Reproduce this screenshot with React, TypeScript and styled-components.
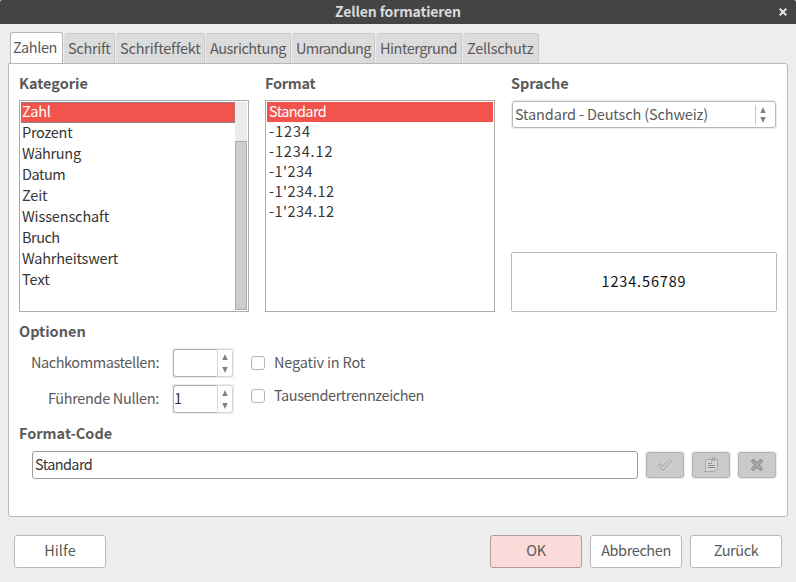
import React from "react";
import styled, { createGlobalStyle } from "styled-components";

const Global = createGlobalStyle`
  * { box-sizing: border-box; }
  body { margin: 0; background: #ededed; }
  button, input { font: inherit; color: inherit; }
`;

const Dialog = styled.main`
  width: 796px;
  height: 582px;
  overflow: hidden;
  background: #ededed;
  color: #5a5a5a;
  font: 14.5px/20px "Noto Sans CJK SC", "Noto Sans", sans-serif;
  white-space: nowrap;
`;
const TitleBar = styled.header`
  height: 24px;
  display: grid;
  grid-template-columns: 26px 1fr 26px;
  align-items: center;
  justify-items: center;
  background: #444;
  border-radius: 2px 2px 0 0;
  color: #dadada;
`;
const Label = styled.span<{ $s?: number }>`
  letter-spacing: ${(p) => p.$s ?? 0}px;
`;
const Title = styled.h1`
  grid-column: 2;
  margin: 0;
  padding-bottom: 2px;
  font-size: 14px;
  line-height: 20px;
  font-weight: 700;
  letter-spacing: -0.14px;
`;
const Tabs = styled.nav`
  display: flex;
  align-items: flex-end;
  gap: 1px;
  height: 39px;
  padding-left: 10px;
`;
const Tab = styled.div<{ $w: number; $active?: boolean }>`
  width: ${(p) => p.$w}px;
  height: ${(p) => (p.$active ? 31 : 30)}px;
  display: flex;
  align-items: center;
  padding: 0 0 ${(p) => (p.$active ? 2 : 1)}px ${(p) => (p.$active ? 2 : 3)}px;
  border: 1px solid ${(p) => (p.$active ? "#b7b7b7" : "#cacaca")};
  border-left-color: ${(p) => (p.$active ? "#b7b7b7" : "#dcdcdc")};
  border-bottom: 0;
  border-radius: 3px 3px 0 0;
  background: ${(p) => (p.$active ? "#fff" : "#dcdcdc")};
`;
const Panel = styled.section`
  width: 780px;
  height: 454px;
  margin-left: 8px;
  padding: 10px 10px 0;
  background: #fff;
  border: 1px solid #b8b8b8;
  border-radius: 0 3px 3px 3px;
`;
const Columns = styled.div`
  display: grid;
  grid-template-columns: 230px 230px 266px;
  gap: 16px;
  height: 248px;
`;
const Column = styled.div`
  display: flex;
  flex-direction: column;
  height: 238px;
`;
const Heading = styled.h2<{ $s?: number }>`
  margin: 0;
  height: 26px;
  font-size: 14.5px;
  line-height: 17px;
  font-weight: 700;
  letter-spacing: ${(p) => p.$s ?? 0}px;
`;
const ListBox = styled.div`
  display: flex;
  height: 212px;
  padding: 1px;
  border: 1px solid #acacac;
  color: #353535;
`;
const Items = styled.div`
  flex: 1;
`;
const Item = styled.div<{ $h: number; $selected?: boolean; $focus?: boolean; $pad: number; $s: number }>`
  height: ${(p) => p.$h}px;
  line-height: 18px;
  padding-left: ${(p) => p.$pad}px;
  letter-spacing: ${(p) => p.$s}px;
  background: ${(p) => (p.$selected ? "#f2544d" : "transparent")};
  color: ${(p) => (p.$selected ? "#fff" : "inherit")};
  outline: ${(p) => (p.$focus ? "1px dotted #8a8284" : "none")};
  outline-offset: -1px;
`;
const Track = styled.div`
  width: 12px;
  padding-top: 39px;
  background: #ebebeb;
`;
const Thumb = styled.div`
  width: 12px;
  height: 169px;
  border: 1px solid #adadad;
  background: #cdcdcd;
`;
const Select = styled.div`
  height: 27px;
  margin: 1px;
  display: flex;
  align-items: center;
  justify-content: space-between;
  padding: 0 9px 0 2px;
  border: 1px solid #b7b7b7;
  border-radius: 3px;
  box-shadow: 0 0 0 1px #ececec;
`;
const SelectText = styled.span`
  padding-bottom: 2px;
  letter-spacing: -0.14px;
`;
const Arrows = styled.span`
  display: flex;
  height: 19px;
  padding-left: 4px;
  align-items: center;
  border-left: 1px solid #c8c8c8;
`;
const Preview = styled.div`
  height: 60px;
  margin-top: auto;
  padding-bottom: 3px;
  display: flex;
  align-items: center;
  justify-content: center;
  border: 1px solid #bbb;
  border-radius: 2px;
  color: #111;
`;
const Options = styled.div`
  display: grid;
  grid-template-columns: 141px 62px 1fr;
  grid-template-rows: 30px 30px;
  gap: 6px 12px;
  height: 76px;
  align-items: center;
`;
const OptionLabel = styled.div<{ $s: number }>`
  text-align: right;
  padding: 0 1px 3px 0;
  letter-spacing: ${(p) => p.$s}px;
`;
const Spinner = styled.div`
  width: 62px;
  height: 30px;
  display: flex;
  border: 1px solid #ececec;
`;
const SpinValue = styled.div`
  width: 44px;
  height: 28px;
  padding-top: 2px;
  border: 1px solid #b0b0b0;
  border-right: 0;
  border-radius: 3px 0 0 3px;
  color: #353535;
`;
const SpinButtons = styled.div`
  width: 16px;
  display: flex;
  align-items: center;
  justify-content: center;
  border: 1px solid #d6d6d6;
  border-radius: 0 3px 3px 0;
`;
const Check = styled.label<{ $up?: number }>`
  display: flex;
  align-items: center;
  gap: 9px;
  padding-left: 5px;
  margin-top: ${(p) => -(p.$up ?? 0)}px;
`;
const CheckText = styled.span<{ $s: number }>`
  margin: -1px 0 1px;
  letter-spacing: ${(p) => p.$s}px;
`;
const Box = styled.span`
  width: 14px;
  height: 14px;
  border: 1px solid #b4b4b4;
  border-radius: 3px;
`;
const CodeRow = styled.div`
  display: flex;
  gap: 8px;
  height: 28px;
  margin-top: 1px;
  padding-left: 13px;
`;
const CodeField = styled.div`
  width: 606px;
  padding: 2px 0 0 2px;
  border: 1px solid #9e9e9e;
  border-radius: 3px;
  color: #353535;
`;
const IconButton = styled.button`
  width: 38px;
  height: 26px;
  margin-top: 1px;
  padding: 0;
  display: flex;
  align-items: center;
  justify-content: center;
  background: #cbcbcb;
  border: 1px solid #b3b3b3;
  border-radius: 3px;
  box-shadow: 0 0 0 1px #ececec;
`;
const Footer = styled.footer`
  display: flex;
  gap: 8px;
  padding: 18px 14px 0;
`;
const Button = styled.button<{ $primary?: boolean; $help?: boolean; $s: number }>`
  width: 92px;
  height: 33px;
  padding: 0 0 4px;
  margin-right: ${(p) => (p.$help ? "auto" : "0")};
  border: 1px solid ${(p) => (p.$primary ? "#b09c9c" : "#bababa")};
  border-radius: 3px;
  background: ${(p) => (p.$primary ? "#fcdcda" : "#fff")};
  letter-spacing: ${(p) => p.$s}px;
`;

const UpDown = ({ gap }: { gap: number }) => (
  <svg width="6" height={12 + gap} viewBox={`0 0 6 ${12 + gap}`} fill="#808080">
    <path d="M3 0 5.7 6H.3z" />
    <path d={`M.3 ${6 + gap}h5.4L3 ${12 + gap}z`} />
  </svg>
);

const categories: [string, number][] = [
  ["Zahl", -0.2], ["Prozent", -0.3], ["Währung", -0.3], ["Datum", -0.5], ["Zeit", -0.1],
  ["Wissenschaft", -0.12], ["Bruch", -0.5], ["Wahrheitswert", -0.2], ["Text", 0],
];
const formats: [string, number][] = [
  ["Standard", -0.6], ["-1234", 0.95], ["-1234.12", 0.87], ["-1'234", 0.45], ["-1'234.12", 0.47], ["-1'234.12", 0.47],
];
const tabs: [string, number, number][] = [
  ["Zahlen", 53, -0.4], ["Schrift", 51, -0.3], ["Schrifteffekt", 89, -0.17], ["Ausrichtung", 85, -0.5],
  ["Umrandung", 83, -0.7], ["Hintergrund", 86, -0.5], ["Zellschutz", 76, -0.25],
];

export default function App() {
  return (
    <Dialog>
      <Global />
      <TitleBar>
        <Title>Zellen formatieren</Title>
        <svg width="8" height="8" viewBox="0 0 8 8" stroke="#e2e2e2" strokeWidth="2"><path d="m.7.7 6.6 6.6m0-6.6L.7 7.3" /></svg>
      </TitleBar>
      <Tabs>
        {tabs.map(([name, w, s], i) => <Tab key={name} $w={w} $active={i === 0}><Label $s={s}>{name}</Label></Tab>)}
      </Tabs>
      <Panel>
        <Columns>
          <Column>
            <Heading>Kategorie</Heading>
            <ListBox>
              <Items>{categories.map(([c, s], i) => <Item key={c} $h={21} $pad={1} $s={s} $selected={i === 0} $focus={i === 0}>{c}</Item>)}</Items>
              <Track><Thumb /></Track>
            </ListBox>
          </Column>
          <Column>
            <Heading $s={-0.3}>Format</Heading>
            <ListBox>
              <Items>{formats.map(([f, s], i) => <Item key={i} $h={20} $pad={2} $s={s} $selected={i === 0}>{f}</Item>)}</Items>
            </ListBox>
          </Column>
          <Column>
            <Heading $s={-0.1}>Sprache</Heading>
            <Select><SelectText>Standard - Deutsch (Schweiz)</SelectText><Arrows><UpDown gap={4} /></Arrows></Select>
            <Preview><Label $s={0.86}>1234.56789</Label></Preview>
          </Column>
        </Columns>
        <Heading>Optionen</Heading>
        <Options>
          <OptionLabel $s={-0.42}>Nachkommastellen:</OptionLabel>
          <Spinner><SpinValue /><SpinButtons><UpDown gap={7} /></SpinButtons></Spinner>
          <Check><Box /><CheckText $s={-0.18}>Negativ in Rot</CheckText></Check>
          <OptionLabel $s={-0.33}>Führende Nullen:</OptionLabel>
          <Spinner><SpinValue>1</SpinValue><SpinButtons><UpDown gap={7} /></SpinButtons></Spinner>
          <Check $up={6}><Box /><CheckText $s={-0.44}>Tausendertrennzeichen</CheckText></Check>
        </Options>
        <Heading>Format-Code</Heading>
        <CodeRow>
          <CodeField><Label $s={-0.6}>Standard</Label></CodeField>
          <IconButton><svg width="16" height="14" viewBox="0 0 16 14"><path d="m1.5 7 2-1.5 2.5 3 6.5-7 2 1.5L6 12.5z" fill="#d0d0d0" stroke="#a2a2a2" strokeLinejoin="round" /></svg></IconButton>
          <IconButton><svg width="16" height="16" viewBox="0 0 16 16" fill="none" stroke="#a8a8a8"><path fill="#d6d6d6" d="M2.5 2.5h12v9l-3 3h-10l1-2z" /><path d="M5 6.5h4M5 8.5h7M5 10.5h7M8 5l2-2" stroke="#8e8e8e" /><circle cx="10.5" cy="2" r="1.5" fill="#c4c4c4" stroke="#999" /></svg></IconButton>
          <IconButton><svg width="12" height="12" viewBox="0 0 12 12"><path d="m2.2 2.2 7.6 7.6m0-7.6L2.2 9.8" stroke="#8c8c8c" strokeWidth="4" strokeLinecap="round" /><path d="m2.2 2.2 7.6 7.6m0-7.6L2.2 9.8" stroke="#aaa" strokeWidth="2" strokeLinecap="round" /></svg></IconButton>
        </CodeRow>
      </Panel>
      <Footer>
        <Button $help $s={0.1}>Hilfe</Button>
        <Button $primary $s={-0.2}>OK</Button>
        <Button $s={-0.4}>Abbrechen</Button>
        <Button $s={-0.4}>Zurück</Button>
      </Footer>
    </Dialog>
  );
}
